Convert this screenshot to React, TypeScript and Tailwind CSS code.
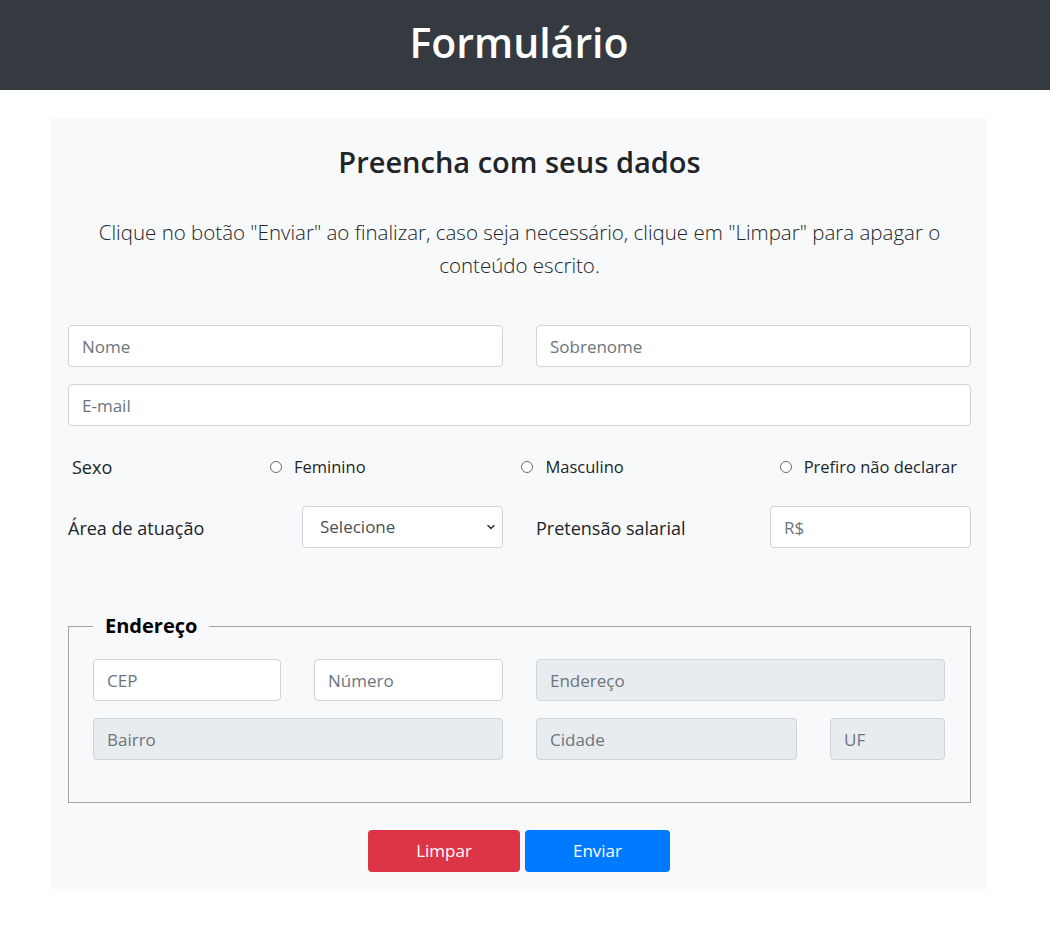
import { ChevronDown } from 'lucide-react';

const font = { fontFamily: '"Open Sans", "Noto Sans", sans-serif' };

function Field({ placeholder, className = '', disabled = false }: { placeholder: string; className?: string; disabled?: boolean }) {
  return (
    <input
      placeholder={placeholder}
      disabled={disabled}
      className={`h-[42px] rounded-[4px] border border-[#ced4da] px-[13px] text-[17px] text-[#495057] placeholder:text-[#6c757d] outline-none ${
        disabled ? 'bg-[#e9ecef]' : 'bg-white'
      } ${className}`}
    />
  );
}

function Radio({ label }: { label: string }) {
  return (
    <label className="flex items-center gap-[12px] text-[16.5px] text-[#212529]">
      <span className="w-[12px] h-[12px] rounded-full border border-[#6d6d6d] bg-white" />
      {label}
    </label>
  );
}

export default function App() {
  return (
    <div className="min-h-screen bg-white" style={font}>
      <header className="h-[90px] bg-[#343a40] flex items-center">
        <h1 className="w-[1038px] text-center text-[41px] font-semibold text-white leading-none pb-[6px]">Formulário</h1>
      </header>

      <div className="ml-[51px] mt-[28px] w-[936px] bg-[#f8f9fa] pl-[17px] pr-[16px] pt-[24px] pb-[17px]">
        <h2 className="text-center text-[29px] font-semibold text-[#212529] leading-[40px]">Preencha com seus dados</h2>
        <p className="mt-[34px] px-[12px] text-center text-[20.5px] font-light leading-[33px] text-[#212529]">
          Clique no botão "Enviar" ao finalizar, caso seja necessário, clique em "Limpar" para apagar o conteúdo escrito.
        </p>

        <form className="mt-[43px]" onSubmit={(e) => e.preventDefault()}>
          <div className="flex gap-[33px]">
            <Field placeholder="Nome" className="w-[435px]" />
            <Field placeholder="Sobrenome" className="w-[435px]" />
          </div>
          <Field placeholder="E-mail" className="mt-[17px] w-full" />

          <div className="mt-[29px] flex items-center justify-between pl-[4px] pr-[14px] h-[24px]">
            <span className="w-[198px] text-[18px] text-[#212529]">Sexo</span>
            <div className="flex-1 flex justify-between">
              <Radio label="Feminino" />
              <Radio label="Masculino" />
              <Radio label="Prefiro não declarar" />
            </div>
          </div>

          <div className="mt-[27px] flex gap-[33px]">
            <div className="w-[435px] flex items-center justify-between">
              <span className="text-[18px] text-[#212529] pt-[3px]">Área de atuação</span>
              <div className="relative w-[201px]">
                <select className="appearance-none w-full h-[42px] rounded-[4px] border border-[#ced4da] bg-white pl-[17px] text-[17px] text-[#495057] outline-none">
                  <option>Selecione</option>
                </select>
                <ChevronDown className="absolute right-[6px] top-[15px] w-[12px] h-[12px] text-[#333]" strokeWidth={3} />
              </div>
            </div>
            <div className="w-[435px] flex items-center justify-between">
              <span className="text-[18px] text-[#212529] pt-[3px]">Pretensão salarial</span>
              <Field placeholder="R$" className="w-[201px]" />
            </div>
          </div>

          <fieldset className="mt-[63px] border border-[#a3a3a3] px-[24px] pb-[42px]">
            <legend className="px-[12px] text-[20px] font-bold text-black leading-[30px]">Endereço</legend>
            <div className="mt-[18px] flex gap-[33px]">
              <Field placeholder="CEP" className="w-[188px]" />
              <Field placeholder="Número" className="w-[189px]" />
              <Field placeholder="Endereço" disabled className="w-[409px]" />
            </div>
            <div className="mt-[17px] flex gap-[33px]">
              <Field placeholder="Bairro" disabled className="w-[410px]" />
              <Field placeholder="Cidade" disabled className="w-[261px]" />
              <Field placeholder="UF" disabled className="w-[115px]" />
            </div>
          </fieldset>

          <div className="mt-[27px] pr-[1px] flex justify-center gap-[5px]">
            <button type="reset" className="w-[152px] h-[42px] rounded-[4px] bg-[#dc3545] text-white text-[17px]">Limpar</button>
            <button type="submit" className="w-[145px] h-[42px] rounded-[4px] bg-[#007bff] text-white text-[17px]">Enviar</button>
          </div>
        </form>
      </div>
    </div>
  );
}
